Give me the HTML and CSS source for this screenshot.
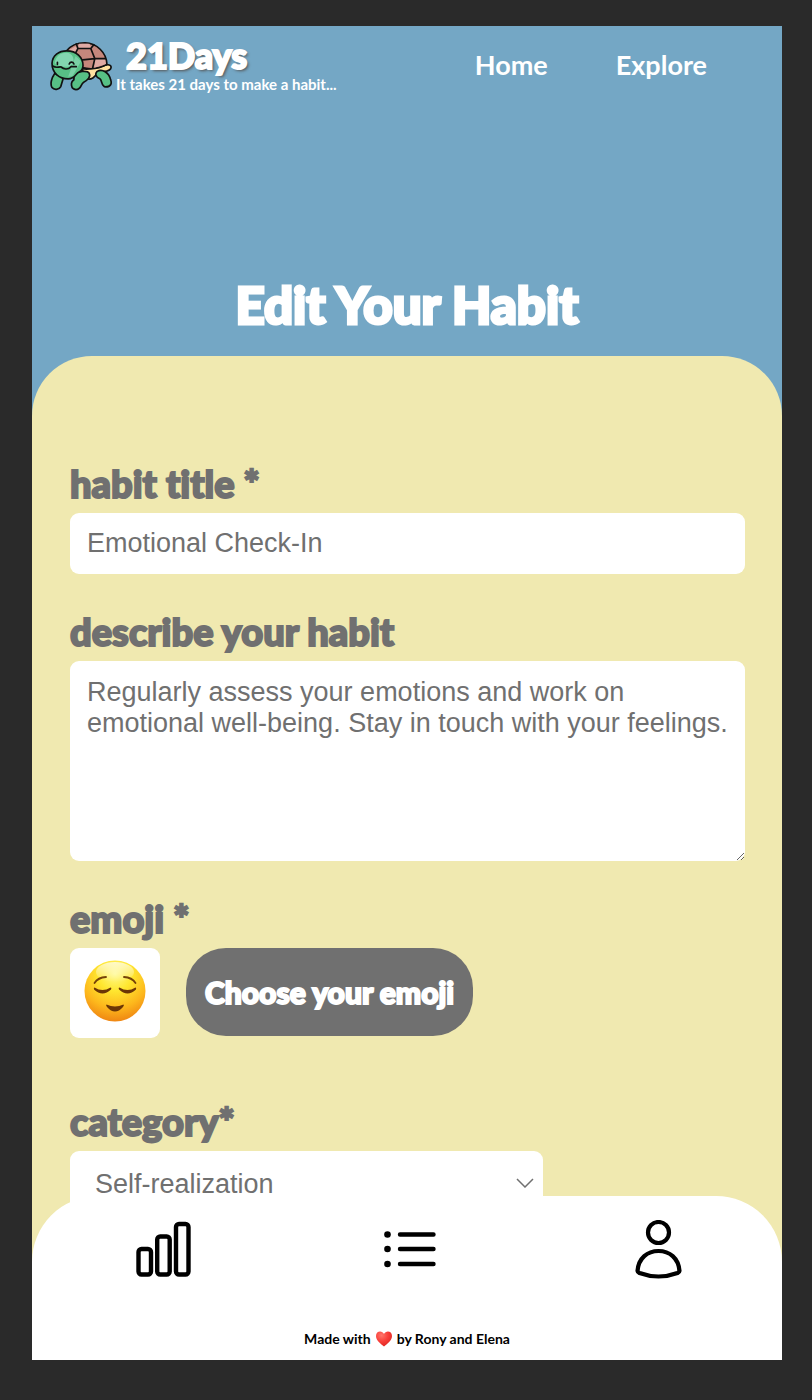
FILE: index.html
```html
<!DOCTYPE html>
<html lang="en">
<head>
<meta charset="utf-8">
<meta name="viewport" content="width=device-width, initial-scale=1">
<title>21Days - Edit Your Habit</title>
<link rel="stylesheet" href="styles.css">
</head>
<body>
<div class="app">
  <header class="hero">
    <div class="topbar">
      <a class="brand" href="#">
        <svg class="turtle" viewBox="30 22 184 148" aria-hidden="true">
          <g stroke="#111" stroke-width="5" stroke-linejoin="round" stroke-linecap="round">
            <path fill="#ffe1a0" d="M124 104 C150 108 174 101 194 94 C207 89 214 96 210 104 C204 114 184 113 170 114 C166 130 150 138 140 134 Z"/>
            <path fill="#c5877c" d="M78 52 C92 34 112 27 134 27 C168 28 198 56 199 91 C178 103 150 107 126 101 Z"/>
            <path fill="#e0aaa4" stroke="none" d="M116 30 L147 30 L153 43 L113 43 Z M164 75 L193 75 L196 90 L161 101 Z M84 50 L106 38 L112 45 L105 57 Z"/>
            <path fill="none" d="M108 30 L113 44 H151 L163 74 L157 100 M113 44 L105 59 M151 44 L160 33 M163 74 H194 M163 74 L127 78"/>
            <path fill="#57c085" d="M44 118 C34 132 30 150 36 160 C42 168 57 167 62 157 L70 130 Z"/>
            <path fill="#57c085" d="M128 112 C107 111 98 128 101 137 C90 144 91 165 107 166 C124 166 120 150 130 144 C142 138 152 127 146 117 C142 111 135 112 128 112 Z"/>
            <path fill="#57c085" d="M170 112 C163 119 165 129 178 134 C185 138 182 157 195 158 C211 158 214 148 210 137 C205 115 185 103 170 112 Z"/>
            <path fill="#57c085" d="M36 88 C37 64 56 51 80 51 C108 51 128 70 128 94 C128 106 124 111 116 114 C106 118 104 134 84 134 C58 134 36 118 36 88 Z"/>
            <path fill="#83d6b0" stroke="none" d="M44 86 C48 66 62 57 79 57 C96 58 102 72 99 88 L88 98 C70 100 50 96 44 86 Z"/>
            <path fill="#7ad1a6" stroke="none" d="M106 66 L122 82 L97 126 L84 128 Z"/>
            <path fill="none" d="M38 96 C50 104 56 97 63 99 C70 105 83 109 92 98 H108 M52 85 V91 M87 90 C90 83 98 83 101 90"/>
          </g>
        </svg>
        <span class="brand-text">
          <span class="brand-name">21Days</span>
          <span class="tagline">It takes 21 days to make a habit...</span>
        </span>
      </a>
      <nav class="links">
        <a href="#">Home</a>
        <a href="#">Explore</a>
      </nav>
    </div>
    <h1 class="title">Edit Your Habit</h1>
  </header>

  <main class="sheet">
    <form class="form">
      <div class="field">
        <label class="label" for="habit-title">habit title *</label>
        <input class="control" id="habit-title" type="text" value="Emotional Check-In">
      </div>
      <div class="field">
        <label class="label" for="habit-text">describe your habit</label>
        <textarea class="control area" id="habit-text">Regularly assess your emotions and work on emotional well-being. Stay in touch with your feelings.</textarea>
      </div>
      <div class="field">
        <label class="label" for="choose-emoji">emoji *</label>
        <div class="emoji-row">
          <div class="emoji-box">
            <svg class="face" viewBox="0 0 62 62" role="img" aria-label="Relieved face">
              <defs>
                <radialGradient id="skin" cx="50%" cy="22%" r="80%">
                  <stop offset="0" stop-color="#fff98a"/>
                  <stop offset=".35" stop-color="#ffe62f"/>
                  <stop offset=".7" stop-color="#fdb71c"/>
                  <stop offset="1" stop-color="#ee8212"/>
                </radialGradient>
                <linearGradient id="shine" x1="0" y1="0" x2="0" y2="1">
                  <stop offset="0" stop-color="#fff" stop-opacity=".7"/>
                  <stop offset="1" stop-color="#fff" stop-opacity="0"/>
                </linearGradient>
              </defs>
              <circle cx="31" cy="31" r="30.5" fill="url(#skin)"/>
              <ellipse cx="31" cy="12" rx="19" ry="10" fill="url(#shine)"/>
              <path fill="none" stroke="#754208" stroke-width="1.8" stroke-linecap="round" d="M10.500 23 Q14 17.500 22 17 M51.500 23 Q48 17.500 40 17"/>
              <path fill="#6b3606" d="M10.500 27.500 Q18.500 32.500 26.500 27.500 Q28 27.500 27 29.500 Q18.500 37.500 10 29.500 Q9.500 27.500 10.500 27.500 Z M35.500 27.500 Q43.500 32.500 51.500 27.500 Q52.500 27.500 52 29.500 Q43.500 37.500 35 29.500 Q34 27.500 35.500 27.500 Z M22.500 44.500 Q31 48.500 39.500 44.500 Q40.500 45 39 47 Q31 56 23 47 Q21.500 45 22.500 44.500 Z"/>
            </svg>
          </div>
          <button class="choose" id="choose-emoji" type="button">Choose your emoji</button>
        </div>
      </div>
      <div class="field category">
        <label class="label" for="category">category*</label>
        <div class="select-wrap">
          <select class="control select" id="category"><option>Self-realization</option></select>
          <svg class="chevron" viewBox="0 0 18 10" aria-hidden="true"><path d="M1 1 L9 9 L17 1" fill="none" stroke="#707070" stroke-width="1.5"/></svg>
        </div>
      </div>
    </form>
  </main>

  <footer class="dock">
    <nav class="tabs">
      <a href="#" aria-label="Statistics">
        <svg class="icon" viewBox="0 0 60 60" fill="none" stroke="#000" stroke-width="4.4" aria-hidden="true">
          <rect x="5.500" y="29" width="12.500" height="25.500" rx="3"/><rect x="24.200" y="16.500" width="12.500" height="38" rx="3"/><rect x="43" y="4" width="12.500" height="50.500" rx="3"/>
        </svg>
      </a>
      <a href="#" aria-label="Habits">
        <svg class="icon" viewBox="0 0 60 60" stroke="#000" stroke-width="4.400" stroke-linecap="round" aria-hidden="true">
          <circle cx="6.500" cy="14.500" r="3.300" stroke="none"/><circle cx="6.500" cy="29" r="3.300" stroke="none"/><circle cx="6.500" cy="44" r="3.300" stroke="none"/>
          <path d="M19 14.500 H52.500 M19 29 H52.500 M19 44 H52.500"/>
        </svg>
      </a>
      <a href="#" aria-label="Profile">
        <svg class="icon" viewBox="0 0 60 60" fill="none" stroke="#000" stroke-width="4.2" stroke-linejoin="round" aria-hidden="true">
          <circle cx="30.500" cy="12.500" r="10.500"/>
          <path d="M9.500 51 C10.500 38 19.500 31 30.500 31 C41.500 31 50.500 38 51.500 51 Q51.500 52 49.500 53 Q30.500 60 11.500 53 Q9.500 52 9.500 51 Z"/>
        </svg>
      </a>
    </nav>
    <p class="credit">Made with
      <svg class="heart" viewBox="0 0 18 17" role="img" aria-label="love">
        <defs><radialGradient id="red" cx="35%" cy="25%" r="80%"><stop offset="0" stop-color="#ff766b"/><stop offset=".5" stop-color="#f9403a"/><stop offset="1" stop-color="#dc2420"/></radialGradient></defs>
        <path fill="url(#red)" d="M9 3 C7.500 -.500 1 -.500 1 5 C1 9.500 6 13 9 15.500 C12 13 17 9.500 17 5 C17 -.500 10.500 -.500 9 3 Z"/>
      </svg>
      by Rony and Elena</p>
  </footer>
</div>
</body>
</html>
```
FILE: styles.css
```css
* {
  box-sizing: border-box;
}

body {
  margin: 0;
  padding: 26px 30px 40px 32px;
  height: 100vh;
  background: #2a2a2a;
  font-family: Lato, sans-serif;
  font-variant-ligatures: none;
}

a {
  color: inherit;
  text-decoration: none;
}

.app {
  position: relative;
  display: flex;
  flex-direction: column;
  height: 100%;
  overflow: hidden;
  background: #74a7c5;
}

.hero {
  display: flex;
  flex-direction: column;
  justify-content: space-between;
  flex: 0 0 330px;
  padding-bottom: 21px;
  color: #fff;
}

.topbar {
  display: flex;
  justify-content: space-between;
  padding: 8px 75px 0 18px;
}

.brand {
  display: flex;
  align-items: center;
  gap: 4px;
}

.turtle {
  width: 62px;
  height: 50px;
  margin-top: 5px;
}

.brand-text {
  display: flex;
  flex-direction: column;
}

.brand-name {
  padding-left: 10px;
  font-size: 36px;
  font-weight: 900;
  line-height: 42px;
  -webkit-text-stroke: 2px #fff;
  text-shadow: 2px 2px 3px #555;
}

.tagline {
  font-size: 15px;
  font-weight: 700;
  line-height: 16px;
}

.links {
  display: flex;
  align-items: center;
  gap: 68px;
  padding-top: 2px;
  font-size: 27px;
  font-weight: 700;
}

.title {
  margin: 0;
  font-size: 51px;
  font-weight: 900;
  line-height: 60px;
  text-align: center;
  -webkit-text-stroke: 3px #fff;
}

.sheet {
  flex: 1 0 auto;
  padding: 107px 37px 0 38px;
  border-radius: 60px 60px 0 0;
  background: #f0e9b0;
}

.form {
  display: flex;
  flex-direction: column;
  gap: 37px;
}

.field {
  display: flex;
  flex-direction: column;
  gap: 10px;
}

.category {
  padding-top: 26px;
}

.label {
  color: #707070;
  font-size: 38px;
  font-weight: 900;
  line-height: 40px;
  -webkit-text-stroke: 2px #707070;
}

.control {
  display: block;
  width: 100%;
  height: 61px;
  padding: 0 17px;
  border: 0;
  border-radius: 9px;
  background: #fff;
  color: #707070;
  font-family: "Liberation Sans", Arial, sans-serif;
  font-size: 27px;
}

.area {
  height: 200px;
  padding: 16px 17px;
  line-height: 31px;
  resize: vertical;
}

.emoji-row {
  display: flex;
  align-items: flex-start;
  gap: 26px;
}

.emoji-box {
  display: flex;
  align-items: center;
  justify-content: center;
  width: 90px;
  height: 90px;
  border-radius: 9px;
  background: #fff;
}

.face {
  width: 62px;
  height: 62px;
  margin-bottom: 4px;
}

.choose {
  height: 88px;
  padding: 0 19px;
  border: 0;
  border-radius: 40px;
  background: #707070;
  color: #fff;
  font-family: inherit;
  font-size: 30px;
  font-weight: 900;
  -webkit-text-stroke: 2px #fff;
}

.select-wrap {
  position: relative;
  width: 70%;
}

.select {
  height: 66px;
  padding: 0 25px;
  appearance: none;
}

.chevron {
  position: absolute;
  top: 27px;
  right: 9px;
  width: 18px;
  height: 10px;
  pointer-events: none;
}

.dock {
  position: absolute;
  right: 0;
  bottom: 0;
  left: 0;
  padding: 24px 0 11px;
  border-radius: 66px 66px 0 0;
  background: #fff;
  color: #000;
}

.tabs {
  display: flex;
  justify-content: space-between;
  padding: 0 94px 0 101px;
}

.icon {
  display: block;
  width: 60px;
  height: 60px;
}

.credit {
  display: flex;
  align-items: center;
  justify-content: center;
  gap: 4px;
  margin: 49px 0 0;
  font-size: 14px;
  font-weight: 700;
  line-height: 20px;
}

.heart {
  width: 18px;
  height: 17px;
}
```
